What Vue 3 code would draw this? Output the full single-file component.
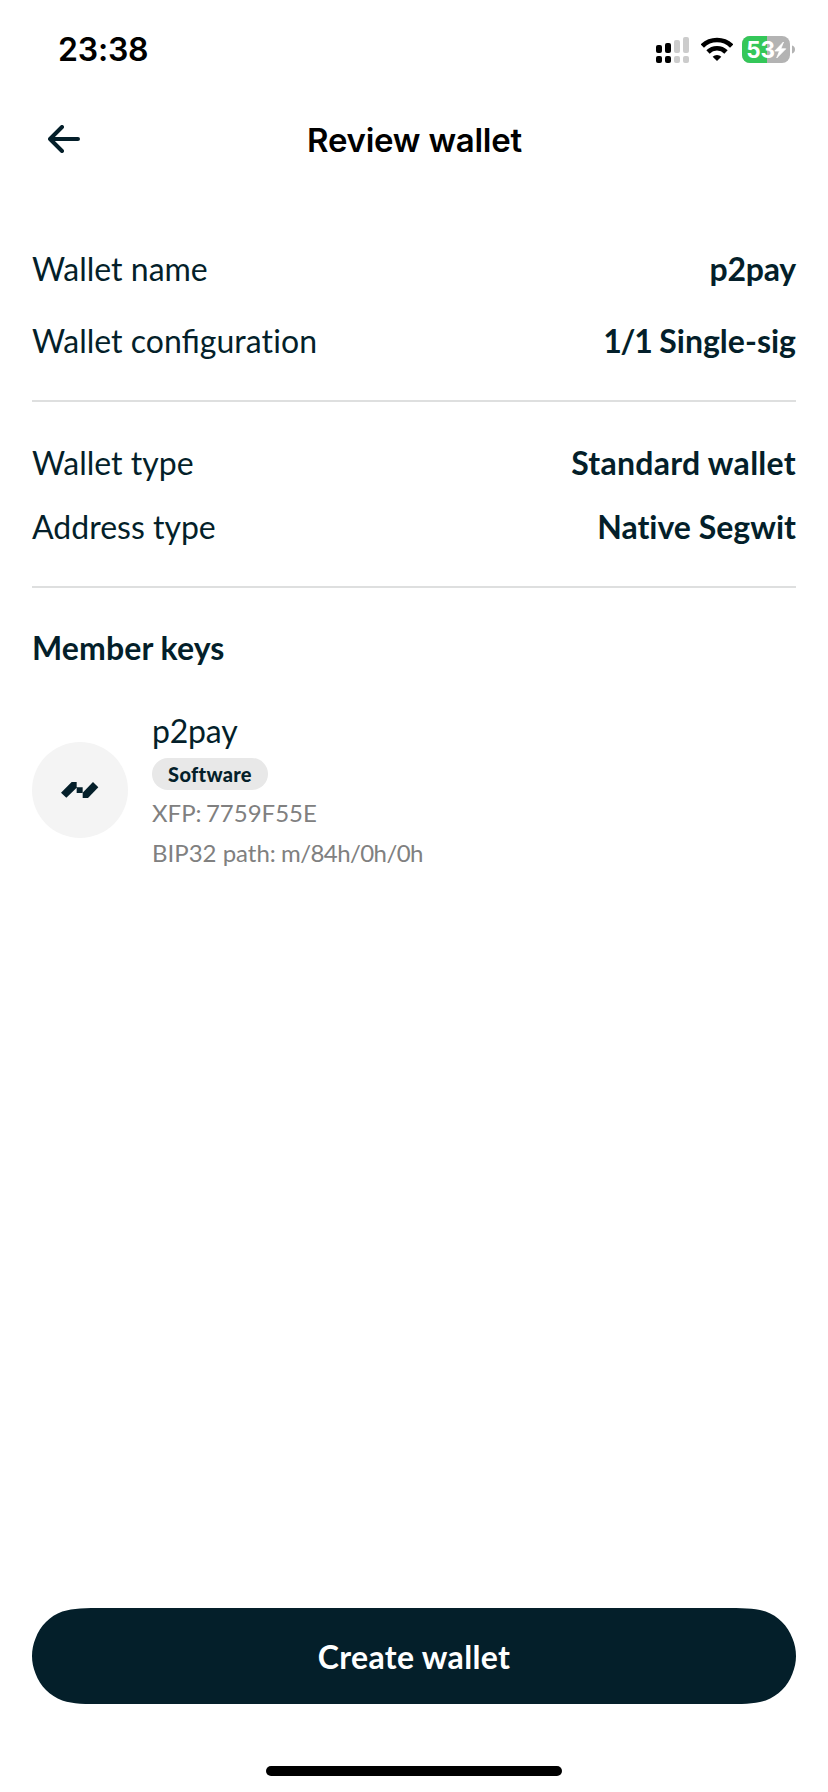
<script setup>
const general = [
  { label: 'Wallet name', value: 'p2pay', tone: 'snug' },
  { label: 'Wallet configu', labelEnd: 'ration', lead: '1/1', value: ' Single-sig', tone: 'even' },
]
const types = [
  { label: 'Wallet type', value: 'Standard wallet', tone: 'open' },
  { label: 'Address type', value: 'Native Segwit', tone: 'even' },
]
const groups = [
  { id: 'general', rows: general, wide: true },
  { id: 'types', rows: types, wide: false },
]
</script>

<template>
  <div class="screen">
    <header class="status">
      <span class="time">23:38</span>
      <div class="indicators">
        <svg class="signal" viewBox="0 0 33 26" width="33" height="26">
          <g fill="#000">
            <rect x="0" y="8" width="6" height="8" rx="2" />
            <rect x="9" y="6" width="6" height="10" rx="2" />
            <rect x="0" y="19" width="6" height="7" rx="2" />
            <rect x="9" y="19" width="6" height="7" rx="2" />
          </g>
          <g fill="#ccc">
            <rect x="18" y="3" width="6" height="13" rx="2" />
            <rect x="27" y="0" width="6" height="16" rx="2" />
            <rect x="18" y="19" width="6" height="7" rx="2" />
            <rect x="27" y="19" width="6" height="7" rx="2" />
          </g>
        </svg>
        <svg class="wifi" viewBox="0 0 96 72" width="32" height="24">
          <g fill="none" stroke="#000" stroke-width="14">
            <path d="M4 27A63 63 0 0 1 92 27" />
            <path d="M21 45A38 38 0 0 1 75 45" />
          </g>
          <path d="M48 72L35 59.500A18 18 0 0 1 61 59.500Z" />
        </svg>
        <svg class="battery" viewBox="0 0 53 27" width="53" height="27">
          <rect width="48" height="27" rx="8" fill="#b3b3b3" />
          <path d="M8 0H25V27H8A8 8 0 0 1 0 19V8A8 8 0 0 1 8 0Z" fill="#34c759" />
          <path d="M50 9.500C52 10 53 11.500 53 13.500S52 17 50 17.500Z" fill="#b3b3b3" />
          <text x="4.300" y="21.500" class="charge">53</text>
          <path d="M41.500 6L32.800 15H37.500L34.700 22L43.800 12.800H38.800Z" fill="#fff" stroke="#fff" stroke-width="0.800" stroke-linejoin="round" />
        </svg>
      </div>
    </header>

    <nav class="nav">
      <svg class="back" viewBox="0 0 32 28" width="32" height="28">
        <path d="M14 2L2 14L14 26M2 14H30" fill="none" stroke="#041f2a" stroke-width="4" stroke-linecap="round" stroke-linejoin="round" />
      </svg>
      <h1>Review wallet</h1>
    </nav>

    <main>
      <section v-for="group in groups" :key="group.id" class="rows" :class="{ wide: group.wide }">
        <div v-for="row in group.rows" :key="row.label" class="row">
          <span>{{ row.label }}<span v-if="row.labelEnd" class="plain">{{ row.labelEnd }}</span></span>
          <strong :class="row.tone"><span v-if="row.lead" class="fraction">{{ row.lead }}</span>{{ row.value }}</strong>
        </div>
      </section>
      <h2>Member keys</h2>
      <article class="key">
        <div class="avatar">
          <svg viewBox="0 0 112 48" width="37.333" height="16" fill="#041f2a">
            <path d="M0 32L32 0H47V16H65V33H47V17L16 47Z" />
            <path d="M65 32L96 0L112 16L81 48H65Z" />
          </svg>
        </div>
        <div class="details">
          <span class="name">p2pay</span>
          <span class="tag">Software</span>
          <span class="meta xfp">XFP: 7759F55E</span>
          <span class="meta">BIP32 path: <span class="path">m/84h/0h/0h</span></span>
        </div>
      </article>
    </main>

    <footer>
      <button class="create">Create wallet</button>
      <div class="home"></div>
    </footer>
  </div>
</template>

<style>
body { background: #fff; }
</style>

<style scoped>
.screen {
  box-sizing: border-box;
  width: 828px;
  height: 1792px;
  display: flex;
  flex-direction: column;
  background: #fff;
  color: #041f2a;
  font-family: Lato, "Liberation Sans", sans-serif;
  font-size: 32px;
  line-height: 40px;
}
.status {
  height: 100px;
  box-sizing: border-box;
  padding: 30px 34px 0 58px;
  display: flex;
  justify-content: space-between;
  align-items: flex-start;
}
.time {
  font-family: Inter, sans-serif;
  font-weight: 600;
  letter-spacing: -0.2px;
  color: #000;
}
.indicators {
  display: flex;
  align-items: flex-start;
  padding-top: 6px;
  margin-right: -1px;
}
.signal { margin-top: 1px; }
.wifi { margin: 1px 9px 0 12px; }
.charge {
  font-family: Inter, sans-serif;
  font-weight: 700;
  font-size: 22.500px;
  letter-spacing: -0.2px;
  fill: #fff;
}
.nav {
  height: 80px;
  display: grid;
  grid-template-columns: 100px 1fr 100px;
  align-items: center;
}
.back { margin-left: 48px; margin-top: -2px; }
h1 {
  margin: 0;
  padding: 0 0 1px 1px;
  font-family: Inter, sans-serif;
  font-size: 33px;
  font-weight: 600;
  letter-spacing: -0.25px;
  text-align: center;
  color: #000;
}
main { padding: 0 32px; flex: 1; }
.rows {
  display: flex;
  flex-direction: column;
  gap: 24px;
  padding: 41px 0 39px;
  border-bottom: 2px solid #dedfdf;
}
.rows.wide { gap: 32px; padding-top: 69px; }
.row { display: flex; justify-content: space-between; }
.plain { font-variant-ligatures: none; letter-spacing: 0.1px; }
strong { font-weight: 700; }
.snug { letter-spacing: -0.2px; }
.even { letter-spacing: 0.01px; }
.open { letter-spacing: 0.28px; }
.fraction { letter-spacing: -1.3px; }
h2 {
  margin: 40px 0 43px;
  font-size: 32px;
  line-height: 40px;
  font-weight: 700;
  letter-spacing: 0.1px;
}
.key { display: flex; gap: 24px; }
.avatar {
  width: 96px;
  height: 96px;
  margin-top: 31px;
  border-radius: 50%;
  background: #f4f4f4;
  display: flex;
  align-items: center;
  justify-content: center;
}
.details { display: flex; flex-direction: column; align-items: flex-start; }
.name { letter-spacing: -0.2px; }
.tag {
  box-sizing: border-box;
  width: 116px;
  height: 32px;
  margin: 7px 0 3px;
  border-radius: 16px;
  background: #e8e8e8;
  font-size: 20px;
  line-height: 33px;
  font-weight: 900;
  letter-spacing: 0.3px;
  text-align: center;
}
.meta { font-size: 24px; color: #808080; }
.xfp { word-spacing: -1.8px; }
.path { margin-left: -1px; letter-spacing: -0.57px; }
footer { display: flex; flex-direction: column; align-items: center; padding-bottom: 16px; }
.create {
  width: 764px;
  height: 96px;
  border: 0;
  padding: 2px 0 0;
  background: #041f2a;
  color: #fff;
  font: 700 32px/40px Lato, sans-serif;
  letter-spacing: 0.35px;
  clip-path: path("M73.400 0H690.600C711.800 0 722.300 0 733.700 3.600C746.100 8.100 755.900 17.900 760.400 30.300C762.800 36 764 42 764 48S762.800 60 760.400 65.700C755.900 78.100 746.100 87.900 733.700 92.400C722.300 96 711.800 96 690.600 96H73.400C52.200 96 41.700 96 30.300 92.400C17.900 87.900 8.100 78.100 3.600 65.700C1.200 60 0 54 0 48S1.200 36 3.600 30.300C8.100 17.900 17.900 8.100 30.300 3.600C41.700 0 52.200 0 73.400 0Z");
}
.home { width: 296px; height: 10px; margin-top: 62px; border-radius: 5px; background: #000; }
</style>
